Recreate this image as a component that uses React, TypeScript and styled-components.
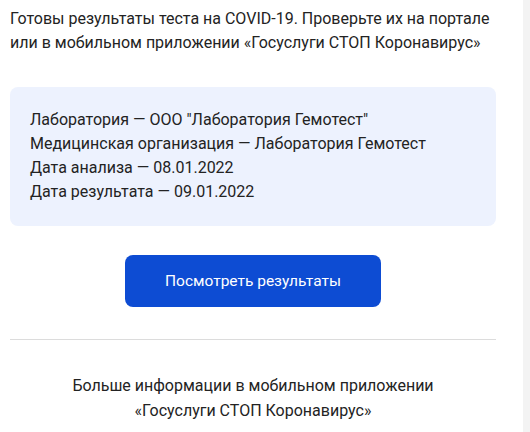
import React from "react";
import styled, { createGlobalStyle } from "styled-components";

const Global = createGlobalStyle`
  html, body { margin: 0; padding: 0; background: #fff; }
  body { font-family: Roboto, "Noto Sans", Arial, sans-serif; color: #232323; }
`;

const Page = styled.div`
  display: flex;
  width: 530px;
  height: 432px;
  overflow: hidden;
`;

const Main = styled.main`
  width: 486px;
  padding: 7px 0 0 10px;
  display: flex;
  flex-direction: column;
`;

const Gutter = styled.div`
  flex: 1;
`;

const Scrollbar = styled.div`
  width: 7px;
  background: #f3f3f3;
`;

const Intro = styled.p`
  margin: 0;
  font-size: 16px;
  line-height: 24px;
`;

const InfoCard = styled.div`
  margin-top: 32px;
  background: #edf2fe;
  border-radius: 8px;
  padding: 21px 20px 22px;
  font-size: 16px;
  line-height: 24px;
`;

const InfoLine = styled.div``;

const ButtonRow = styled.div`
  display: flex;
  justify-content: center;
  margin-top: 29px;
`;

const PrimaryButton = styled.button`
  width: 256px;
  height: 52px;
  border: none;
  border-radius: 8px;
  background: #0d4cd3;
  color: #fff;
  font-family: Roboto, "Noto Sans", Arial, sans-serif;
  font-size: 15.5px;
  cursor: pointer;
`;

const Divider = styled.hr`
  margin: 32px 0 0;
  border: none;
  border-top: 1px solid #dcdcdc;
`;

const Footer = styled.p`
  margin: 33px 0 0;
  text-align: center;
  font-size: 16px;
  line-height: 25px;
`;

const lines = [
  'Лаборатория — ООО "Лаборатория Гемотест"',
  "Медицинская организация — Лаборатория Гемотест",
  "Дата анализа — 08.01.2022",
  "Дата результата — 09.01.2022",
];

export default function App() {
  return (
    <>
      <Global />
      <Page>
        <Main>
          <Intro>
            Готовы результаты теста на COVID-19. Проверьте их на портале
            <br />
            или в мобильном приложении «Госуслуги СТОП Коронавирус»
          </Intro>
          <InfoCard>
            {lines.map((l) => (
              <InfoLine key={l}>{l}</InfoLine>
            ))}
          </InfoCard>
          <ButtonRow>
            <PrimaryButton>Посмотреть результаты</PrimaryButton>
          </ButtonRow>
          <Divider />
          <Footer>
            Больше информации в мобильном приложении
            <br />
            «Госуслуги СТОП Коронавирус»
          </Footer>
        </Main>
        <Gutter />
        <Scrollbar />
      </Page>
    </>
  );
}
